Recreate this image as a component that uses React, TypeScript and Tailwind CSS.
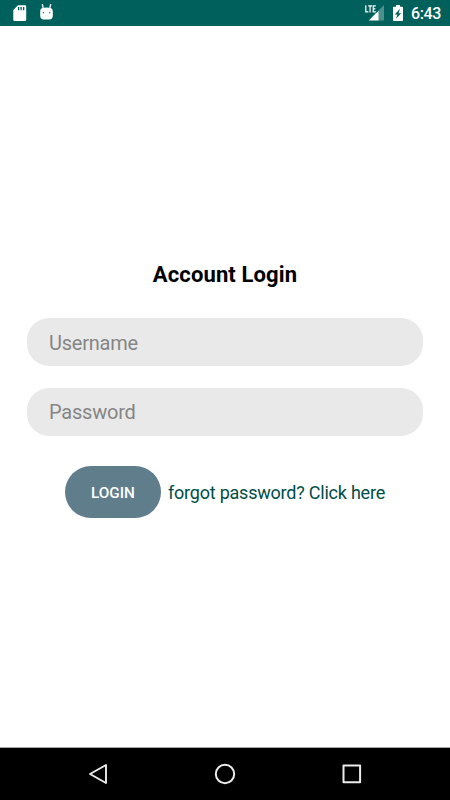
import React from "react";

function SdCardIcon() {
  return (
    <svg width="14" height="17" viewBox="0 0 14 17" className="shrink-0">
      <path
        fillRule="evenodd"
        fill="#fff"
        d="M5 .2h7a1.2 1.2 0 0 1 1.2 1.2v13.4a1.2 1.2 0 0 1-1.2 1.2H1.5a1.2 1.2 0 0 1-1.2-1.2V5zM5 2v3.2h1.3V2zM7.5 2v3.2h1.3V2zM10 2v3.2h1.3V2z"
      />
    </svg>
  );
}

function AndroidHeadIcon() {
  return (
    <svg width="14" height="17" viewBox="0 0 14 17" className="shrink-0">
      <path d="M2.4.6l.9 4M10.6.6l-.9 4" stroke="#d5e8e6" strokeWidth="1.5" strokeLinecap="round" />
      <path d="M2.4 4Q6.5 3 10.6 4Q12.8 4.6 12.8 7v5a3.6 3.6 0 0 1-3.6 3.4H3.8A3.6 3.6 0 0 1 .2 12V7Q.2 4.6 2.4 4z" fill="#fff" />
      <circle cx="3.3" cy="8.8" r=".8" fill="#35817b" />
      <circle cx="9.7" cy="8.8" r=".8" fill="#35817b" />
    </svg>
  );
}

function SignalIcon() {
  return (
    <svg width="20" height="18" viewBox="0 0 20 18" className="shrink-0">
      <path d="M19 1v15.5h-6V7z" fill="#4d908c" />
      <path d="M13.5 7v9.5H3.8L10.6 9.5l.6-.6z" fill="#fff" />
      <path d="M.8 1.3v6.6h2.6M3.2 1.9h3.8M5.1 1.9v6.6M10.8 1.9H8.2v6h2.6M8.2 4.9h2.2" fill="none" stroke="#fff" strokeWidth="1.2" />
    </svg>
  );
}

function BatteryIcon() {
  return (
    <svg width="10" height="17" viewBox="0 0 10 17" className="shrink-0">
      <path d="M3 0h4v1.7h2.2a.8.8 0 0 1 .8.8v12.7a.8.8 0 0 1-.8.8H.8a.8.8 0 0 1-.8-.8V2.5a.8.8 0 0 1 .8-.8H3z" fill="#fff" />
      <path d="M7 3.8L1.8 9.4h2.6L3 13.8l5.2-5.6H5.6z" fill="#00605c" />
    </svg>
  );
}

function StatusBar() {
  return (
    <header className="flex h-[26px] shrink-0 items-start bg-[#00605c] pl-[13px] pr-[9px] text-white">
      <div className="flex gap-[13px] pt-[5px]">
        <SdCardIcon />
        <div className="-mt-[1px]"><AndroidHeadIcon /></div>
      </div>
      <div className="ml-auto flex items-start">
        <div className="pt-[4px]"><SignalIcon /></div>
        <div className="ml-[8px] pt-[5px]"><BatteryIcon /></div>
        <span className="ml-[8px] w-[30px] pt-[4px] text-[16px] leading-[20px] font-medium tracking-[-0.35px]">6:43</span>
      </div>
    </header>
  );
}

function NavigationBar() {
  return (
    <nav className="flex h-[53px] shrink-0 items-center justify-between border-t border-[#a9a9a9] bg-black px-[87px] pb-px">
      <svg width="22" height="22" viewBox="0 0 22 22" fill="none" stroke="#ececec" strokeWidth="1.9" strokeLinejoin="round">
        <path d="M19 2v18L3 11z" />
      </svg>
      <svg width="22" height="22" viewBox="0 0 22 22" fill="none" stroke="#ececec" strokeWidth="2">
        <circle cx="11" cy="11" r="9.2" />
      </svg>
      <svg width="22" height="22" viewBox="0 0 22 22" fill="none" stroke="#ececec" strokeWidth="2" strokeLinejoin="round">
        <path d="M2.5 2.5h16.6v16.8H2.5z" />
      </svg>
    </nav>
  );
}

const fieldClass =
  "block h-[48px] w-full rounded-[22px] bg-[#e9e9e9] px-[22px] pt-[1px] text-[20px] tracking-[-0.22px] text-black outline-none placeholder:text-[#858585] placeholder:opacity-100";

export default function App() {
  return (
    <div className="flex h-[800px] w-[450px] flex-col overflow-hidden bg-white font-['Roboto',sans-serif]">
      <StatusBar />
      <main className="flex flex-1 flex-col px-[27px] pt-[235px]">
        <h1 className="text-center text-[22px] leading-[28px] font-bold tracking-[0.12px] text-black">Account Login</h1>
        <form className="mt-[29px]" onSubmit={(e) => e.preventDefault()}>
          <input className={fieldClass} placeholder="Username" aria-label="Username" />
          <input className={`${fieldClass} mt-[21.5px]`} type="password" placeholder="Password" aria-label="Password" />
          <div className="mt-[30.5px] flex items-center justify-center gap-[7px]">
            <button className="h-[52px] w-[96px] rounded-[26px] bg-[#607d8b] pt-[2px] text-[15.3px] font-medium text-white">LOGIN</button>
            <a href="#" className="pt-[1px] text-[18px] leading-[24px] tracking-[-0.22px] whitespace-nowrap text-[#004d47]">forgot password? Click here</a>
          </div>
        </form>
      </main>
      <NavigationBar />
    </div>
  );
}
